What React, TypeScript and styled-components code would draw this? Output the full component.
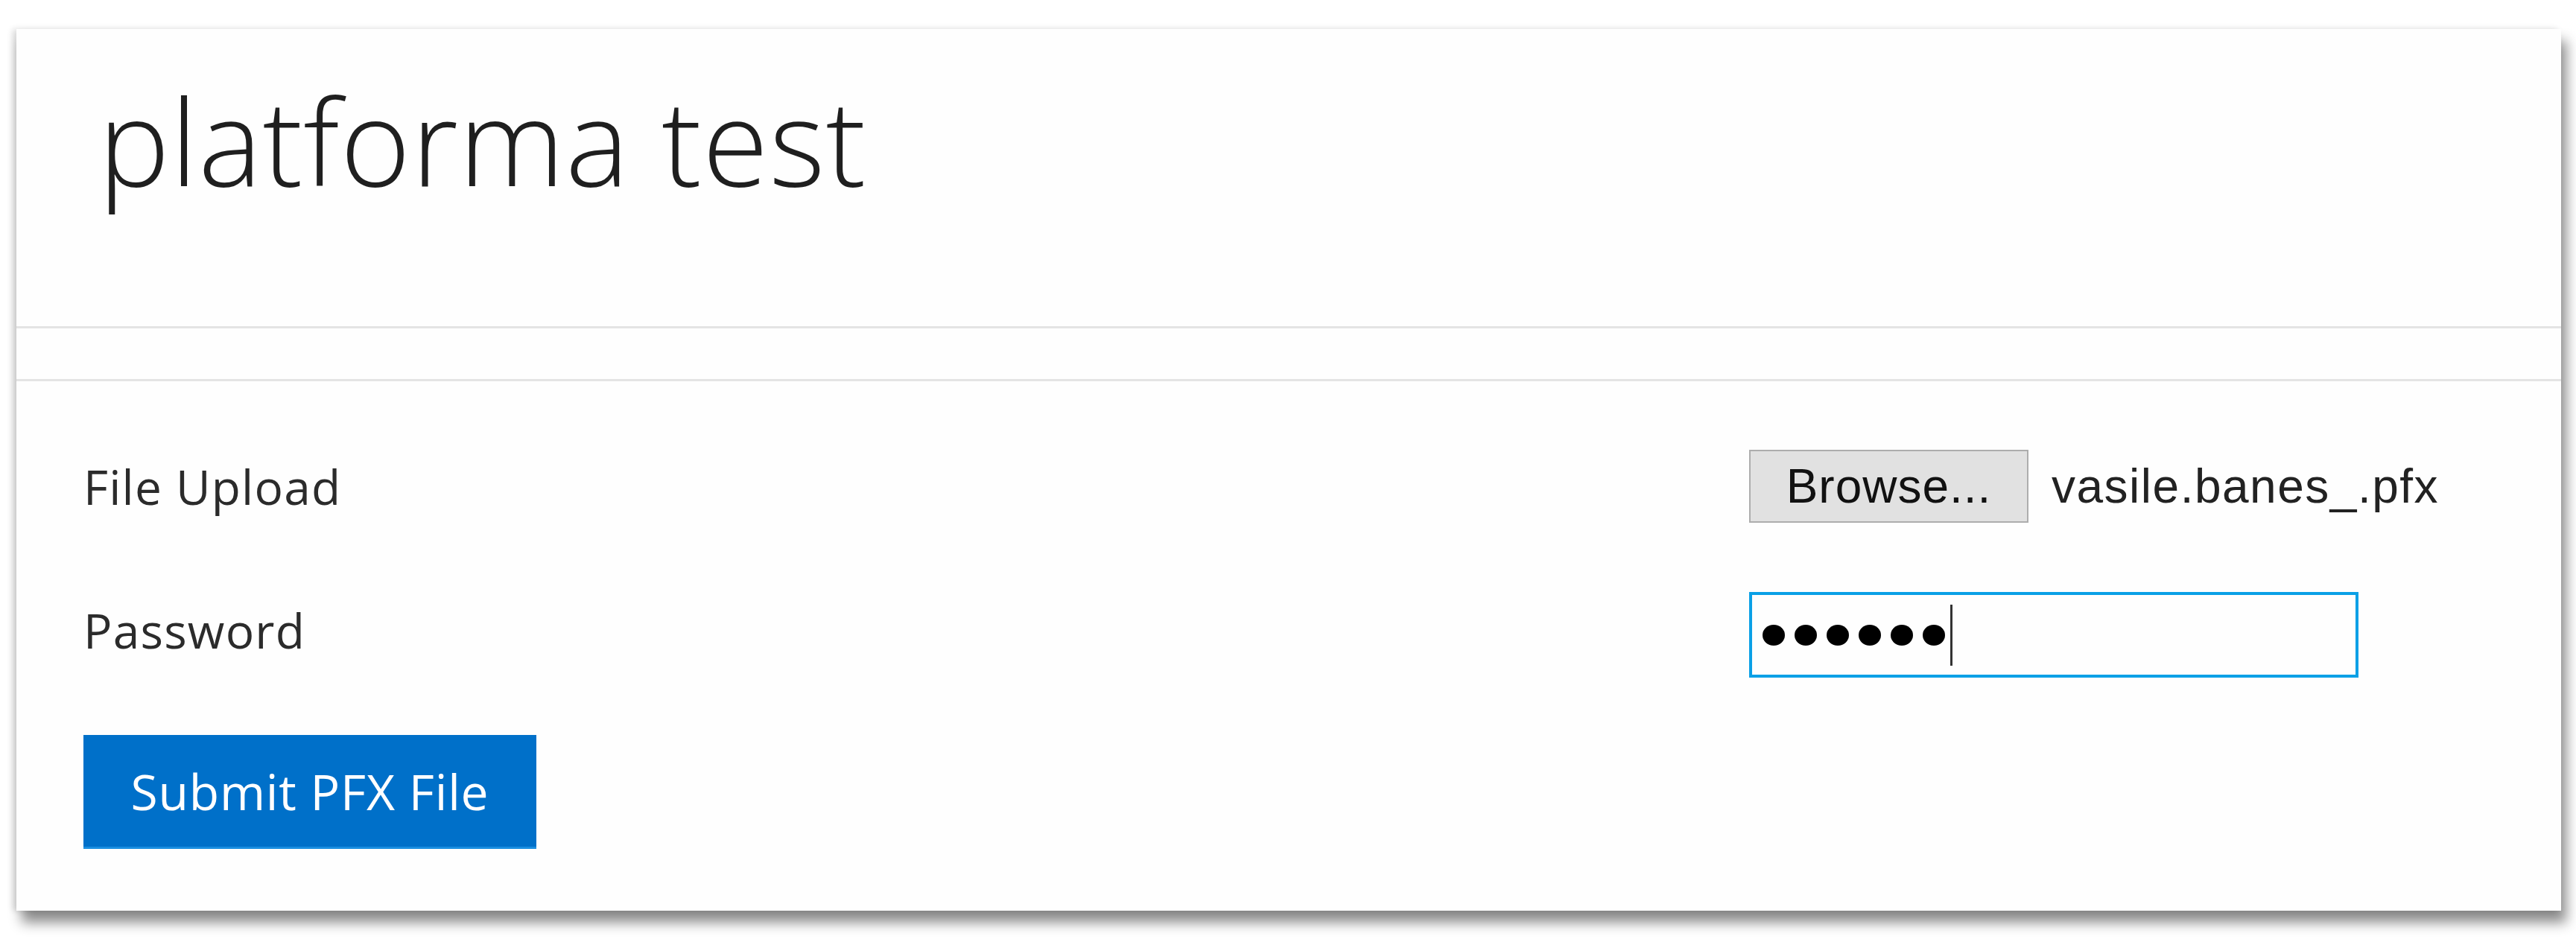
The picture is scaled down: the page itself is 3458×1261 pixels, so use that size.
import styled, { createGlobalStyle } from "styled-components";

const GlobalStyle = createGlobalStyle`
    html, body {
        margin: 0;
        padding: 0;
        background: #ffffff;
    }
    body {
        font-family: "Open Sans", "Noto Sans", sans-serif;
        color: #333333;
    }
`;

const Page = styled.div`
    width: 3458px;
    height: 1261px;
    padding: 39px 0 0 22px;
    box-sizing: border-box;
    overflow: hidden;
`;

const Card = styled.div`
    width: 3416px;
    height: 1184px;
    background: #fefefe;
    box-shadow: 7px 16px 16px rgba(0, 0, 0, 0.45), -5px 0 8px rgba(0, 0, 0, 0.14);
    display: flex;
    flex-direction: column;
`;

const Header = styled.div`
    height: 402px;
    box-sizing: border-box;
    border-bottom: 3px solid #e4e4e4;
    padding: 68px 0 0 110px;
`;

const Title = styled.h1`
    margin: 0;
    font-family: "Open Sans", "Noto Sans", sans-serif;
    font-weight: 300;
    font-size: 161px;
    line-height: 1;
    color: #1f1f1f;
    letter-spacing: 1px;
`;

const Strip = styled.div`
    height: 71px;
    box-sizing: border-box;
    border-bottom: 3px solid #e4e4e4;
`;

const Form = styled.form`
    display: grid;
    grid-template-columns: 2236px 1fr;
    row-gap: 93px;
    padding: 92px 0 0 90px;
`;

const Label = styled.label<{ $lift?: number }>`
    display: flex;
    align-items: center;
    font-size: 64px;
    color: #2b2b2b;
    letter-spacing: 1.2px;
    transform: translateY(${({ $lift }) => -($lift ?? 0)}px);
`;

const Control = styled.div`
    display: flex;
    align-items: center;
`;

const BrowseButton = styled.button`
    width: 375px;
    height: 98px;
    box-sizing: border-box;
    background: #e1e1e1;
    border: 2px solid #adadad;
    border-radius: 0;
    font-family: "Liberation Sans", Arial, sans-serif;
    font-size: 64px;
    letter-spacing: 1px;
    color: #111111;
    padding: 0;
`;

const FileName = styled.span`
    margin-left: 31px;
    font-family: "Liberation Sans", Arial, sans-serif;
    font-size: 64px;
    letter-spacing: 1.5px;
    color: #222222;
`;

const PasswordField = styled.div`
    width: 818px;
    height: 115px;
    box-sizing: border-box;
    border: 4px solid #0aa0e6;
    display: flex;
    align-items: center;
    gap: 13px;
    padding-left: 14px;
`;

const Dot = styled.span`
    width: 30px;
    height: 28px;
    border-radius: 50%;
    background: #000000;
`;

const Caret = styled.span`
    width: 3px;
    height: 82px;
    background: #333333;
    margin-left: -6px;
`;

const SubmitRow = styled.div`
    grid-column: 1 / span 2;
    margin-top: -16px;
`;

const SubmitButton = styled.button`
    width: 608px;
    height: 153px;
    background: #0070c9;
    border: none;
    border-bottom: 3px solid #1a8ee0;
    color: #ffffff;
    font-family: "Open Sans", "Noto Sans", sans-serif;
    font-size: 66px;
    letter-spacing: 0.8px;
    padding: 0;
`;

export default function App() {
    return (
        <>
            <GlobalStyle />
            <Page>
                <Card>
                    <Header>
                        <Title>platforma test</Title>
                    </Header>
                    <Strip />
                    <Form onSubmit={(e) => e.preventDefault()}>
                        <Label>File Upload</Label>
                        <Control>
                            <BrowseButton type="button">Browse...</BrowseButton>
                            <FileName>vasile.banes_.pfx</FileName>
                        </Control>
                        <Label $lift={6}>Password</Label>
                        <Control>
                            <PasswordField>
                                {Array.from({ length: 6 }).map((_, i) => (
                                    <Dot key={i} />
                                ))}
                                <Caret />
                            </PasswordField>
                        </Control>
                        <SubmitRow>
                            <SubmitButton type="submit">Submit PFX File</SubmitButton>
                        </SubmitRow>
                    </Form>
                </Card>
            </Page>
        </>
    );
}
